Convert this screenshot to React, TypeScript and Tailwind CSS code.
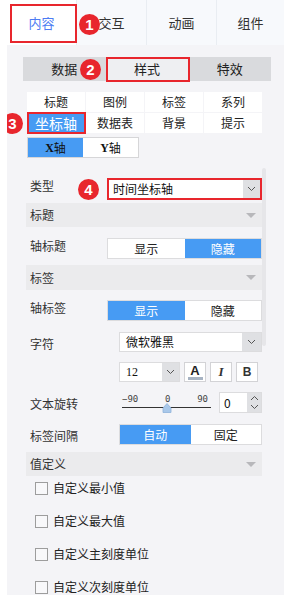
import React from "react";

const Tri = () => (
  <div className="w-0 h-0 border-l-[5px] border-r-[5px] border-t-[5px] border-l-transparent border-r-transparent border-t-[#b8b8bb]" />
);

const Chev = ({ up = false }: { up?: boolean }) => (
  <svg width="9" height="6" viewBox="0 0 9 6" className={up ? "rotate-180" : ""}>
    <path d="M1 1 L4.5 4.5 L8 1" fill="none" stroke="#555" strokeWidth="1" />
  </svg>
);

const Header = ({ title, h = "h-[24px]", mt }: { title: string; h?: string; mt: string }) => (
  <div className={`${mt} ${h} bg-[#ebebed] flex items-center justify-between pl-[4px] pr-[6px]`}>
    <span className="text-[12px] text-[#333]">{title}</span>
    <Tri />
  </div>
);

const Badge = ({ n, cls }: { n: string; cls: string }) => (
  <div
    className={`absolute ${cls} w-[21px] h-[21px] rounded-full bg-[#e8262d] text-white flex items-center justify-center text-[15px] font-bold font-['Liberation_Sans',sans-serif] leading-none`}
  >
    {n}
  </div>
);

const Toggle = ({ left, right, active, cls }: { left: string; right: string; active: 0 | 1; cls?: string }) => (
  <div className={`flex-1 h-full flex border border-[#dcdcde] bg-white ${cls ?? ""}`}>
    <div className={`flex-1 flex items-center justify-center ${active === 0 ? "bg-[#479bf3] text-white" : "text-[#222]"}`}>{left}</div>
    <div className={`flex-1 flex items-center justify-center ${active === 1 ? "bg-[#479bf3] text-white" : "text-[#222]"}`}>{right}</div>
  </div>
);

const Check = ({ label, first }: { label: string; first?: boolean }) => (
  <div className={`${first ? "" : "mt-[9px]"} h-[24px] flex items-center pl-[9px] gap-[5px]`}>
    <div className="w-[13px] h-[13px] border border-[#9d9d9d] bg-[#f8f8fa]" />
    <span className="text-[12px] text-[#222]">{label}</span>
  </div>
);

export default function App() {
  const grid = ["标题", "图例", "标签", "系列", "坐标轴", "数据表", "背景", "提示"];
  return (
    <div className="relative w-[284px] h-[595px] overflow-hidden bg-[#f4f4f7] border-l-[7px] border-white font-['Noto_Sans_CJK_SC',sans-serif] text-[12px] text-[#333]">
      {/* top tabs */}
      <div className="flex h-[45px] bg-[#f7f9fc]">
        <div className="w-[70px] bg-white flex items-center justify-center text-[13px] text-[#4d7cf3] border-r border-[#e9edf2]">内容</div>
        <div className="w-[70px] flex items-center justify-center text-[13px] text-[#333] border-r border-[#e9edf2]">交互</div>
        <div className="w-[70px] flex items-center justify-center text-[13px] text-[#333] border-r border-[#e9edf2]">动画</div>
        <div className="flex-1 flex items-center justify-center text-[13px] text-[#333]">组件</div>
      </div>

      {/* segmented */}
      <div className="mt-[12px] ml-[16px] mr-[13px] h-[24px] bg-[#d9dadd] flex text-[13px] text-[#222]">
        <div className="flex-1 flex items-center justify-center">数据</div>
        <div className="flex-1 flex items-center justify-center bg-[#eeeff2]">样式</div>
        <div className="flex-1 flex items-center justify-center">特效</div>
      </div>

      {/* grid */}
      <div className="mt-[11px] ml-[20px] w-[235px] grid grid-cols-4 gap-[1px]">
        {grid.map((g, i) => (
          <div
            key={g}
            className={`h-[20px] flex items-center justify-center ${i === 4 ? "bg-[#479bf3] text-white text-[14px]" : "bg-white text-[#222] text-[12px]"}`}
          >
            {g}
          </div>
        ))}
      </div>

      {/* X/Y */}
      <div className="mt-[4px] ml-[20px] w-[112px] h-[21px] flex border border-[#d6d6d8] text-[12px] text-[#111]">
        <div className="flex-1 bg-[#479bf3] flex items-center justify-center">
          <span className="font-['Liberation_Serif',serif] font-bold">X</span>轴
        </div>
        <div className="flex-1 bg-white flex items-center justify-center">
          <span className="font-['Liberation_Serif',serif] font-bold">Y</span>轴
        </div>
      </div>

      {/* form */}
      <div className="ml-[19px] w-[236px]">
        <div className="mt-[20px] h-[22px] flex items-center">
          <div className="w-[81px] pl-[4px] pb-[6px]">类型</div>
          <div className="flex-1 h-full flex border-2 border-[#e8262d] bg-white">
            <div className="flex-1 flex items-center pl-[4px] text-[12px] text-[#111]">时间坐标轴</div>
            <div className="w-[17px] bg-[#dfe0e3] flex items-center justify-center">
              <Chev />
            </div>
          </div>
        </div>

        <Header title="标题" mt="mt-[3px]" />

        <div className="mt-[11px] h-[21px] flex items-center">
          <div className="w-[81px] pl-[4px] pb-[6px]">轴标题</div>
          <Toggle left="显示" right="隐藏" active={1} />
        </div>

        <Header title="标签" mt="mt-[6px]" h="h-[25px]" />

        <div className="mt-[10px] h-[21px] flex items-center">
          <div className="w-[81px] pl-[4px] pb-[6px]">轴标签</div>
          <Toggle left="显示" right="隐藏" active={0} />
        </div>

        <div className="mt-[11px] h-[20px] flex items-center">
          <div className="w-[93px] pl-[4px] pt-[4px]">字符</div>
          <div className="flex-1 h-full flex border border-[#dcdcde] bg-white">
            <div className="flex-1 flex items-center pl-[6px] text-[#111]">微软雅黑</div>
            <div className="w-[19px] bg-[#dfe0e3] flex items-center justify-center">
              <Chev />
            </div>
          </div>
        </div>

        <div className="mt-[10px] h-[20px] flex pl-[93px] gap-[4px]">
          <div className="w-[61px] h-full flex border border-[#dcdcde] bg-white">
            <div className="flex-1 flex items-center pl-[6px] font-['Liberation_Serif',serif] text-[12px] text-[#111]">12</div>
            <div className="w-[17px] bg-[#dfe0e3] flex items-center justify-center">
              <Chev />
            </div>
          </div>
          <div className="w-[22px] h-full border border-[#d3d3d6] bg-white flex flex-col items-center justify-center">
            <span className="font-['Liberation_Sans',sans-serif] font-bold text-[13px] leading-[11px] text-[#222]">A</span>
            <div className="w-[15px] h-[3px] bg-[#a7b3c3] mt-[1px]" />
          </div>
          <div className="w-[22px] h-full border border-[#d3d3d6] bg-white flex items-center justify-center font-['Liberation_Serif',serif] italic font-bold text-[13px] text-[#333]">I</div>
          <div className="w-[22px] h-full border border-[#d3d3d6] bg-white flex items-center justify-center font-['Liberation_Sans',sans-serif] font-bold text-[12px] text-[#333]">B</div>
        </div>

        <div className="mt-[10px] h-[21px] flex items-center">
          <div className="w-[93px] pl-[4px] pt-[2px]">文本旋转</div>
          <div className="relative w-[96px] h-full pl-[3px]">
            <div className="w-[86px] flex justify-between font-['DejaVu_Sans_Mono',monospace] text-[9px] leading-[9px] text-[#444] mt-[3px]">
              <span>−90</span>
              <span>0</span>
              <span>90</span>
            </div>
            <div className="mt-[3px] w-[89px] h-px bg-[#333]" />
            <svg className="absolute left-[43px] top-[11px]" width="10" height="10" viewBox="0 0 10 10">
              <path d="M5 0.5 L9 5 L9 9.5 L1 9.5 L1 5 Z" fill="#a9c8ea" stroke="#8fb3db" strokeWidth="0.8" />
            </svg>
          </div>
          <div className="ml-auto w-[43px] h-full flex border border-[#dcdcde] bg-white">
            <div className="flex-1 flex items-center pl-[4px] text-[12px] text-[#111]">0</div>
            <div className="w-[14px] bg-[#dfe0e3] flex flex-col items-center justify-center gap-[3px]">
              <Chev up />
              <Chev />
            </div>
          </div>
        </div>

        <div className="mt-[11px] h-[21px] flex items-center">
          <div className="w-[93px] pl-[4px] pt-[2px]">标签间隔</div>
          <Toggle left="自动" right="固定" active={0} />
        </div>

        <Header title="值定义" mt="mt-[7px]" />

        <Check label="自定义最小值" first />
        <Check label="自定义最大值" />
        <Check label="自定义主刻度单位" />
        <Check label="自定义次刻度单位" />
      </div>

      {/* scrollbar thumb */}
      <div className="absolute left-[255px] top-[168px] w-[4px] h-[178px] bg-[#e6e6e9] rounded-sm" />

      {/* annotations */}
      <div className="absolute left-[3px] top-[4px] w-[67px] h-[39px] border-2 border-[#e8262d]" />
      <div className="absolute left-[99px] top-[57px] w-[84px] h-[25px] border-2 border-[#e8262d]" />
      <div className="absolute left-[20px] top-[112px] w-[59px] h-[22px] border-2 border-[#e8262d]" />
      <Badge n="1" cls="left-[72px] top-[14px]" />
      <Badge n="2" cls="left-[73px] top-[59px]" />
      <Badge n="3" cls="left-[-5px] top-[113px]" />
      <Badge n="4" cls="left-[71px] top-[179px]" />
    </div>
  );
}
